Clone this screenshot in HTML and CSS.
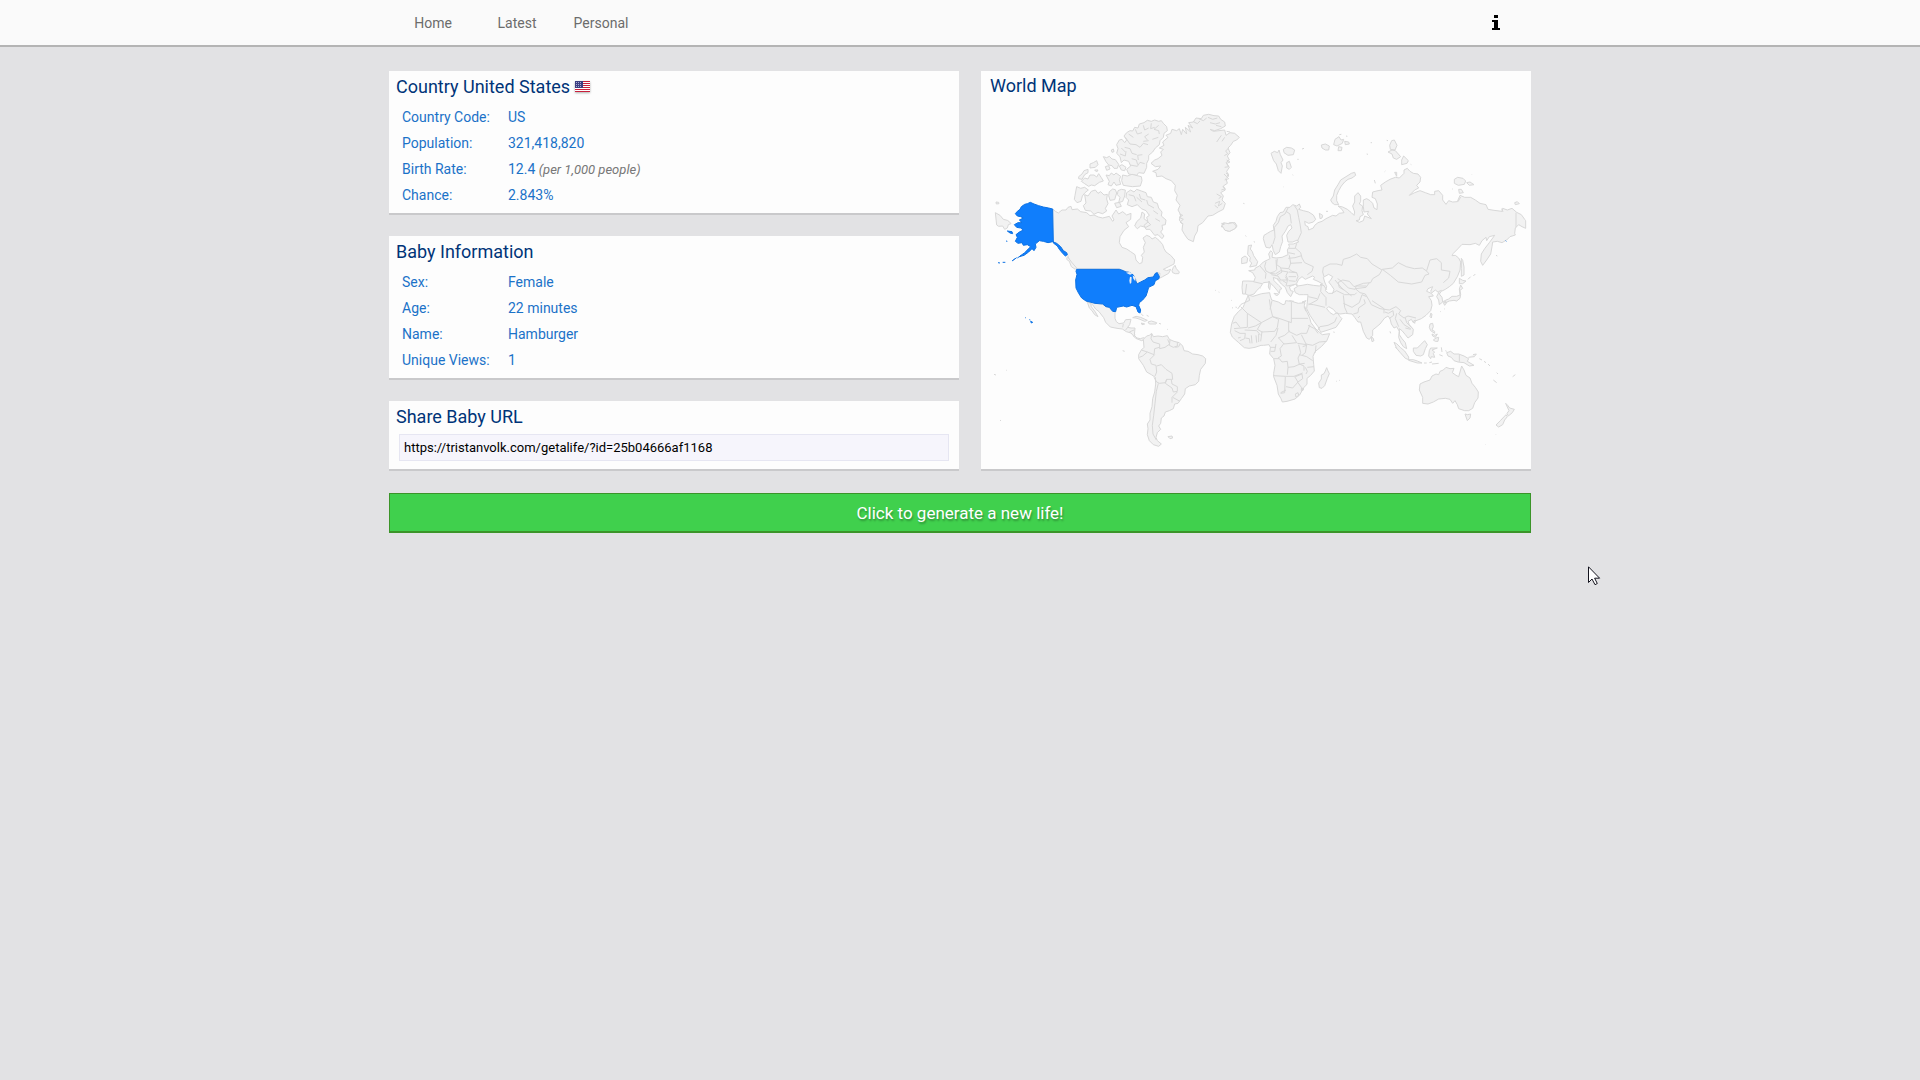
FILE: index.html
```
<!DOCTYPE html>
<html lang="en">
<head>
    <meta charset="UTF-8">
    <meta name="viewport" content="width=device-width, initial-scale=1">
    <title>Get A Life</title>
    <link rel="stylesheet" href="styles.css">
</head>
<body>
    <header class="navbar">
        <nav class="nav-inner">
            <a class="nav-link" href="#home">Home</a>
            <a class="nav-link" href="#latest">Latest</a>
            <a class="nav-link" href="#personal">Personal</a>
            <a class="nav-info" href="#about" aria-label="About">
                <svg width="8" height="16" viewBox="0 0 8 16"><path d="M2 0h4v3H2zM0 5h6v8h2v2H0v-2h2V7H0z"/></svg>
            </a>
        </nav>
    </header>

    <main class="container">
        <div class="columns">
            <div class="left-column">
                <section class="card">
                    <h2 class="card-title">Country United States
                        <svg class="flag" width="16" height="12" viewBox="0 0 16 12">
                            <path fill="#fff" d="M0 0h15v11H0z"/>
                            <path stroke="#c8203c" d="M0 .5h15M0 2.5h15M0 4.5h15M0 6.5h15M0 8.5h15M0 10.5h15"/>
                            <path fill="#3c3f82" d="M0 0h8v7H0z"/>
                            <path stroke="#a9abd0" stroke-dasharray="1 1" d="M1 1.5h6M1 3.5h6M1 5.5h6"/>
                        </svg>
                    </h2>
                    <table class="info">
                        <tr><th scope="row">Country Code:</th><td>US</td></tr>
                        <tr><th scope="row">Population:</th><td>321,418,820</td></tr>
                        <tr><th scope="row">Birth Rate:</th><td>12.4 <i>(per 1,000 people)</i></td></tr>
                        <tr><th scope="row">Chance:</th><td>2.843%</td></tr>
                    </table>
                </section>

                <section class="card">
                    <h2 class="card-title">Baby Information</h2>
                    <table class="info">
                        <tr><th scope="row">Sex:</th><td>Female</td></tr>
                        <tr><th scope="row">Age:</th><td>22 minutes</td></tr>
                        <tr><th scope="row">Name:</th><td>Hamburger</td></tr>
                        <tr><th scope="row">Unique Views:</th><td>1</td></tr>
                    </table>
                </section>

                <section class="card">
                    <h2 class="card-title"><label for="share-url">Share Baby URL</label></h2>
                    <input class="share-url" id="share-url" type="text" readonly value="https://tristanvolk.com/getalife/?id=25b04666af1168">
                </section>
            </div>

            <section class="card map-card">
                <h2 class="card-title">World Map</h2>
                <svg class="map" viewBox="0 0 1650 1107" role="img" aria-label="World map with the United States highlighted">
                    <!-- Canada, Greenland, Iceland -->
                    <g class="land" transform="translate(-3 -120)">
                        <path d="M46 458l14 8 10 12 12 3 6 4 5 6-8 3-3 10-8 4-6-10-12 1-6-4zM48 426l8 1 1 4-8 1z"/>
                        <path d="M218 447L226 454 235 459 246 450 258 450 264 442 273 439 276 449 292 447 302 455 320 458 330 467 342 465 355 471 368 474 388 469 398 484 402 480 396 468 408 450 416 462 428 455 440 465 453 460 452 478 438 488 446 500 432 511 420 530 418 548 426 562 440 567 452 575 465 584 468 600 478 611 486 608 488 592 484 586 493 576 490 562 496 548 489 534 500 526 510 530 516 537 526 532 538 542 548 554 552 566 558 576 572 586 584 600 582 612 566 620 550 628 560 632 572 628 566 640 548 650 538 655 540 640 530 637 520 650 497 660 480 668 471 671 468 658 460 645 446 636 434 634 418 627 288 627 276 614 268 600 262 582 246 566 232 553 218 545z"/>
                        <path d="M576 632l4-10 5-6 4 10 9 10-2 5-10 0-8-3zM262 590l8 10 6 8 14 16-4 4-12-8-6-16-8-6z"/>
                        <path d="M432 228L440 218 450 212 458 213 464 202 474 204 478 192 492 188 502 181 514 184 524 180 536 184 544 182 550 190 560 200 562 212 552 220 550 232 540 242 538 254 526 264 518 276 506 286 506 298 500 310 500 322 492 340 476 338 470 346 446 342 440 328 452 318 446 304 432 300 424 308 420 290 410 280 414 266 410 254 418 240 426 238 434 248 440 240z"/>
                        <path class="line" d="M436 232l14 20 18 2 12 8 10-12 14 4M434 262l16 4 6 14 14 4M420 282l16 6 2-14M446 222l14 10M466 208l6 14 14-4M490 196l4 14 12-6M514 190l-2 16 12-4M536 196l-14 12 14 4 2 10M455 296l14 4 4 14M475 300l-2-14 14-2M450 315l22 4 8-12 14 4M506 222l-12 8 8 10M535 232l-18 6M490 244l16-2M424 264l12 12"/>
                        <path d="M428 345l14 3 14-5 28 7 2 12-5 16-24 2-27-4-5-14zM394 270l6-3 2 8-6 2zM296 350l10-8 6-10 12-4 0 10-10 6-8 14-10-2zM304 364l10-10 10 3 6-12 12 0 8 6 6-10 8 12 6 10-12 4-14 10-10-2-8 4-12-8zM330 312l10-4 10-6 4 12-8 8-16 2zM344 330l10 0-4 6zM370 290l10 3 8-4 8 8 10 2 10 14-4 12-10 0-6-8-10-2-8-10zM378 345l10 2 6-8 8 6 6-6 14 10-4 10 4 14-14 3-6-10-8 12-10-4 4-10zM376 320l10-3 4 10-10 4zM418 318l8-4 12 8-4 10-10-2zM388 395l10-8 8 2 4 10-6 20-14 2-4-14zM414 392l10-4 12 2-2 18-6 16-12 4 4-16-8-8zM404 430l14-3 6 12-14 4z"/>
                        <path d="M290 380l12 5 12-3 11 8-10 8-8 10-4 16-12 4-8-10 2-12zM314 404l10 4 10-14 12-4 8 10 8-5 10 10 10-2-2 14 4 14-8 14 4 8-12 8-14-4-12 6-10-10-16-2-6-14 8-8z"/>
                        <path d="M440 398L452 390 462 396 470 388 484 393 498 398 502 410 514 412 520 426 532 430 536 444 546 456 544 468 558 480 556 494 546 496 548 508 542 516 552 528 546 536 534 524 524 526 510 508 498 508 492 496 504 486 500 472 508 466 498 452 484 446 472 434 456 440 442 434 446 420 438 412zM470 485L482 474 486 456 494 462 492 476 502 484 512 494 498 502 482 498 472 506 464 498z"/>
                        <path class="line" d="M446 404l16 4 6 16M478 402l4 14 14 4M500 420l4 14 18 10M520 452l14 10M526 476l14 8M470 412l16 14"/>
                        <path d="M513 310L524 300 534 296 546 286 542 276 550 268 538 264 552 256 548 246 564 232 558 226 572 220 576 208 590 212 598 206 604 224 608 208 620 222 616 202 632 216 624 196 638 204 626 188 640 186 648 174 664 176 670 166 686 163 702 167 716 168 722 178 734 186 736 198 722 206 704 212 690 208 700 214 734 210 738 226 750 218 764 220 778 232 770 240 760 244 752 256 744 264 750 278 742 288 748 300 738 308 748 322 740 334 746 348 738 356 742 370 730 378 736 390 722 398 730 408 726 420 736 430 730 448 714 456 698 466 684 468 668 488 654 497 652 514 644 528 640 545 624 538 614 524 606 510 608 494 598 480 602 464 594 450 600 436 588 420 592 406 584 392 586 376 574 362 558 356 546 348 530 350 528 338 518 334 534 328 542 318 526 320z"/>
                        <path class="line" d="M745 265l-8 8 6 8-10 6M740 300l10 6-10 4 6 10-12 2M738 340l8 2-6 8 6 6-12 4M728 380l8 6-12 4M710 402l14 8-8 6M705 430l14-6-4 14 12-8M704 436l10 8M598 462l10 4-10 6 12 6-10 8 10 6M640 185l12 6 8-8M656 176l14 6 10-8M684 172l14 6 14-4M690 188l16 4 14-4M708 196l16 4M724 226l-14 20M734 232l-8 12M740 350l-8-8"/>
                        <path d="M723 500l6-3-4-7 10 1 6 2 8-5 16 0 6 10-4 6-16 9-8 0-10-5 4-6zM790 430l3 1M740 214l10 2M796 527l2 1M822 544l2 2"/>
                    </g>
                    <!-- Central and South America -->
                    <g class="land" transform="translate(-3 420)">
                        <path d="M318 183l27 7 23 2 10 8 10 2 8 10 9 3 0 20 4 10 8 6 14-2 6-10 16-1-4 16-6 8 10 2 12 0-2 22 8 8 10 2 10-3 6 4-12 5-18-7-14-16-14-4-12-8-16-2-20-4-14-14-6-14-14-18-10-8-10-14z"/>
                        <path d="M322 186l10 4 2 10 12 16 8 14-10-6-8-12-8-8z"/>
                        <path class="line" d="M428 262l2-10M443 262l-6 8M462 270l-14 6M466 285l-6 4"/>
                        <path d="M458 233l10-4 14 3 20 9-8 3-14-6-12-4zM504 246l10-3 16 5-2 4-20 0zM484 249l10 3-8 2zM537 250l6 2M482 220l8 8M500 226l6 3M562 268l2 1M428 332l6 2"/>
                        <path d="M490 298L500 288 508 286 515 280 520 290 534 288 548 290 562 287 568 298 582 304 598 308 608 318 612 332 624 334 638 342 654 344 668 348 677 356 676 370 662 388 658 406 656 424 646 434 628 438 616 446 614 462 604 476 594 490 584 492 580 506 568 512 556 516 552 528 544 534 542 550 536 558 542 568 532 578 528 592 532 602 544 612 536 619 520 614 508 602 502 584 504 566 502 552 510 540 510 520 516 500 518 476 524 456 527 432 526 412 514 404 500 396 490 376 476 356 476 344 484 330 492 322z"/>
                        <path class="line" d="M515 282l-2 14 6 10 20 6 0 14 16-4 14-10-6-14M570 300l-2 16 12 6 12-4 0-12M600 312l-4 8-10 2M478 352l10-4 14-12-18-6M502 336l20 8 2-18 14-4M524 344l-14 14 4 14 14 4 2 20-5 12M530 378l14-4 14 14 18 12 2 18-18 0-4 10-18 2-8-4-8-14M560 418l-4 12 20 14 4 12 12-2 0-14-16-8-2-12M592 456l-16 16 0 16M578 472l22 12M535 430l-6 24-4 36-4 36-4 30 2 26 10 18"/>
                        <path d="M564 590l12-2 2 6-8 2zM42 403l6 2M78 390l2 1M60 541l3 1M706 151l2 1M716 156l2 1"/>
                    </g>
                    <!-- Europe and Asia -->
                    <g class="land" transform="translate(717 0)">
                        <path d="M150 444L138 442 134 430 130 416 132 406 142 400 152 394 162 390 160 376 168 364 172 350 180 338 190 336 198 322 210 322 218 314 230 318 238 312 242 322 236 328 250 332 266 336 280 345 287 358 280 366 266 370 254 364 256 376 264 380 266 390 280 384 284 376 294 368 306 364 318 356 330 350 338 346 348 348 358 340 372 338 366 328 354 318 368 321 382 328 394 338 402 346 404 336 398 318 404 306 404 288 414 278 422 288 422 304 418 312 428 318 426 332 430 344 420 350 418 360 408 362 418 367 430 362 434 348 444 352 454 356 442 342 446 334 432 336 430 320 430 300 440 296 450 302 458 310 462 324 471 329 472 312 466 296 456 292 458 276 474 272 486 270 482 256 496 246 510 238 526 232 538 234 552 220 552 210 562 205 570 214 580 220 594 222 602 232 600 246 590 256 596 264 584 270 568 286 584 278 600 272 616 278 632 284 644 284 644 274 656 272 668 286 668 300 678 313 686 302 698 306 712 305 720 286 734 292 752 292 766 300 780 310 798 314 804 328 822 331 846 334 848 325 862 330 876 325 890 337 904 344 914 358 917 362 917 385 906 380 896 374 886 384 884 400 886 405 870 410 860 420 846 428 832 424 818 426 816 440 812 462 800 480 788 496 782 484 784 462 794 446 808 428 824 406 808 410 800 422 798 412 786 422 778 436 766 430 750 434 726 433 714 446 700 460 696 467 706 466 716 474 722 486 720 510 712 530 700 550 688 560 676 568 664 574 658 582 666 592 668 606 658 614 656 600 650 590 656 578 646 570 636 578 632 574 638 560 624 566 620 574 634 580 640 588 626 590 634 602 636 616 632 632 618 646 604 656 588 662 580 668 574 658 564 664 568 674 580 688 578 704 564 714 556 704 546 692 538 686 538 704 546 716 556 728 560 746 550 740 542 728 536 712 538 694 530 680 522 684 514 672 510 656 504 648 494 654 480 672 468 682 458 690 458 706 448 718 440 714 430 694 422 666 414 666 404 652 396 642 376 640 360 642 350 640 340 628 326 620 320 626 330 638 340 644 352 638 360 650 366 656 358 668 348 682 324 690 302 697 294 680 282 664 270 646 260 626 262 606 264 584 250 584 238 584 226 578 222 566 232 560 228 552 218 556 208 560 212 572 220 574 212 590 202 578 196 562 184 552 170 536 160 532 162 542 176 556 186 566 180 568 178 580 172 572 162 560 148 546 130 548 122 560 110 572 102 582 86 587 78 582 68 582 66 562 68 543 84 543 102 544 106 532 98 518 86 512 104 510 106 504 118 498 130 486 142 480 150 476 146 462 152 452 158 458 156 472 168 474 186 472 204 464 202 450 208 440 206 432 220 432 236 426 232 420 218 426 204 426 200 406 206 394 216 384 212 374 204 378 196 394 186 408 188 424 182 440 178 456 166 464 160 452 156 434z"/>
                        <path class="sea" d="M230 550L236 538 246 530 256 538 264 534 278 528 284 532 280 538 294 544 308 552 298 558 280 556 262 553 246 556 232 558zM310 532L326 523 338 530 332 540 326 546 334 556 342 568 338 580 326 580 316 572 320 560 314 546z"/>
                        <path class="line" d="M205 322l-10 20-14 8-6 18-12 14 2 30-6 20M198 334l12 8 4 28M224 318l8 12 4 22 4 20 4 26-12 26M230 430l-4 14 16 14 4 16 8 14 26 12-4 14-14 10M138 485l-4 14 4 14 12 6 14-4 6-6-2-30M172 476l-2 18 14 10 22 2 6-16-4-24M120 498l12 14 6 8-2 16M207 445l20 0M205 458l20 4M205 475l20-2 20-6M210 490l36-2M206 506l10 8 14 4 4 12-6 14M150 520l16 2 16-10 22 4-6 10 6 14-22 0-8-12-20-4M182 504l4 12-16 10M196 530l6 12-4 16M206 542l20 2M200 558l22-4M188 542l10 6M100 545l26 6M80 552l-4 30M206 516l24 2M172 534l10 10M206 530l22 0"/>
                        <path class="line" d="M312 530l-4-14 2-14 20-10 20 0 16 4 4-18 20-6 20-10 12 10 20 4 14 16 30 18-8 14-20 12-6 12-22 2-28 10-14-16-20-4-14 8 4 14 14 8M487 508l30-4 18-16 24 12 24 6 24-2 14 10 6 8-12 4-10 20-30 6-40-6-24-20zM620 512l10-32 20-4 14 12 0 22 26 4-4 20-16 14M448 548l-10 14-32 4 14 12 16 4 12 20 6 12 26 12 28 4 20-10 14 12-6 10 16 12 12-6 24 6M405 568l-20-4-20-20-12-8M405 568l4-10 30 0M336 580l14-8 24 12 30 0 6-6M302 575l16 18 0 24M302 575l2-22M310 555l10 14M370 586l4 36 8 18M370 610l26 12 22-14 8-24 14 6M400 642l14-4 2-14 20-14-4-12M456 602l36 24 0 14M414 654l6-6M265 612l16 2 34 8M300 580l-8 20-26 14M265 590l26 6M294 690l6-10 24-4 20-10 6-14M300 553l12 4M345 540l20 24 30 24M495 636l10 4 14-8 2 14-14 10M530 640l-4 16 10 24M540 658l12 16 20 12M556 654l4 14 14 14M556 684l16 4M655 575l10-4M888 338l0 44M845 326l4 10M714 305l8-14"/>
                        <path d="M85 437l10-2-4 12 6 8 4 12 12 18-4 12-20 4 6-12-6-6 2-10-8-10zM65 474l10-6 8 6-2 14-16 3zM5 375l8-2-2-5 14 3 14-3 10 10-4 8-16 8-14-3zM72 311l1 1M102 426l2 1M78 408l1 1"/>
                        <path d="M153 160l10-6 10 4 4-8 4 14 8 16-6 8 4 10-4 22-8-8-6-20-8-10zM190 148l10-6 14 2 10 6-4 14-16 2-12-8zM200 188l8-4 6 18-6 6-8-4zM232 178l4 0M246 147l6-2M218 224l1 2M191 261l1 1"/>
                        <path d="M304 135l12-3 12 6-2 12-10 0-10-6zM345 118l12-8 6 10 8-2-4 12-16 8-10-4zM356 140l10 2-2 10-10 0zM374 124l12 2 2 6-12 2zM378 108l4 1M358 104l6-1M452 128l4 0M440 162l4 1"/>
                        <path d="M332 300L340 288 344 270 354 254 362 240 378 230 394 220 404 217 407 226 396 234 384 238 374 246 364 258 356 272 350 286 350 302 356 314 344 314 336 308zM298 340l10 6-2 8-6 2zM318 334l6 0"/>
                        <path d="M515 122l8-2 8 16-6 14-14-2-2-12zM504 156l12-6 10 2 16 18-12 8-10-4-4-12zM545 180l6-12 14 14-4 8-16 4zM500 121l4 1M572 193l2 1M524 217l6 0 0 12zM463 240l3 10M494 215l2-2"/>
                        <path d="M703 238l10-6 16 3 8 8-4 10-18 3-12-6zM740 248l10-2 12 8-14 2zM716 268l8 0 6 10-12 2zM754 222l1 1M696 267l2 0M884 308l8-3 6 6-12 3z"/>
                        <path d="M724 475l4 6 4 20 0 24-8 4 0-24zM828 466l4 2M766 522l-6 6M752 530l-8 8M718 535l10 6 10 2-10 8-10 0zM722 555l-4 12 2 18-10 4-14 0-10 8-10 4-2 8 14-6 14-2 8 2 10-8 2-12-2-12 8-6zM672 602l8 6-6 8-4-8z"/>
                        <path d="M120 563l2 1M147 543l4 12-2 14-4-8zM162 580l14 2-6 6zM208 602l14 2M246 606l12-4-8 8z"/>
                    </g>
                    <!-- Africa, Indonesia, Oceania -->
                    <g class="land" transform="translate(717 480)">
                        <path d="M85 105l14 4 26-8 24-3 2 10 4 12 20 6 14 8 6-2 2-10 18 2 20 6 20-2-2 8 6 16 10 22 4 14 12 16 14 14 8 6 22-3-8 20-16 18-20 16-6 14 2 24 2 20-12 14-10 8 0 18-10 10-12 22-14 12-24 7-14 2-4-10-8-14-4-26-10-26 0-10 4-24-4-20-12-14 2-20-4-8-16 2-8 0-18 6-18 3-14-2-18-16-18-16-6-14 4-26 8-22 12-14 14-12 4-10z"/>
                        <path class="line" d="M85 107l4 14-26 12-10 14M62 140l20 20 42 28 34-18-6-24-4-28M82 160l0 42-40 4M38 190l10-4 12 16M84 204l22-6 18-10M156 122l-6 26M158 170l16 4 40 14 0-12 0-51M214 175l50 0M158 170l18 8-4 24-8 12-38 2-14-8 12-20M174 204l-6 22-16 20M126 214l-4 30M74 210l36 2 12 14M44 212l16 8 16 0-2 16-14 6M76 234l12 2 2 14M94 226l2 24M108 226l2 22M116 222l0 24M62 232l-8 2M206 184l0 30 24 12 14-6 16 0 10-26M174 234l20-8 16-14M264 196l20 10 10 14M216 226l14 22-38 4-16-18M192 250l-12 16 4 22-10 6M150 262l18 0M152 274l12 0 4-22M244 224l14 28 20 4 20-10 22-2M288 256l-2 22M232 250l28 4-4 24-10 8M260 256l-12 4M238 284l22 6 18 12M236 254l6 24-8 16 4 20M162 296l16 0 8 10 16-2 2 18 18-2 18-8 14-2M160 347l36 2 26 0 26-10M204 322l-2 22M238 312l14 6 0 14M256 322l6 12-4 8M262 322l20-2M196 350l-2 48-12 2M198 380l20 4 16-18-10-16M234 366l14-10-2-14-20 8M234 368l10 14 4 10M226 402l8-4 2 8-8 6zM244 386l6-2 0 6-6 2zM182 398l16-8M258 154l-6-14"/>
                        <path d="M320 323l4 10 4 8-6 14-8 22-8 8-8-2-2-14 8-12 0-12 8-4 4-8zM348 363l2 1M358 361l2 1M340 216l4 1M34 121l2 1M36 143l3 1M48 140l1 4"/>
                        <path d="M600 372L612 366 630 360 636 348 648 342 656 344 660 334 670 330 678 322 690 326 702 325 697 338 708 346 716 350 720 336 725 318 732 330 738 346 750 354 756 370 766 382 775 396 774 414 764 428 758 445 746 452 734 452 716 446 712 434 705 422 698 430 690 418 676 415 656 417 640 426 624 432 608 430 608 412 598 390z"/>
                        <path d="M735 462l8 2 9-2-2 12-8 8zM857 430l6 6 6 8 14 4-6 10-12 10-4-8 6-8zM858 464l4 6-8 10-6 14-12 7-8-6 14-14zM828 524l1 1M796 553l1 1"/>
                        <path d="M522 247l8 4 12 12 12 10 12 18 0 8-10-4-16-18-10-12zM566 299l14 0 12 4 14 6-14 0-26-8zM580 264l12 0 10-10 12-12 8 12-6 12-6 18-8 4-14-2-8-12zM628 272l4-8 20 0-16 6 8 6-4 4 4 12-10-2-2 6-6-8zM612 309l8 0M628 308l8-2M636 312l20-2M664 262l2 14M658 284l10 4M676 272l4 2"/>
                        <path d="M680 278L692 274 702 282 716 282 732 288 746 296 742 304 762 316 748 318 732 308 714 306 702 302 694 292 684 288zM718 283l0 22M745 292l18-2 6-8-10 2M778 296l8 4M792 304l6 4M804 312l6 6M830 338l4 4M820 360l10 8M878 350l8-6"/>
                        <path d="M630 192l8-2 2 10-4 10 8 4 0 6-12-8-4-10zM636 222l8 4 8-4-6 10-8-4zM640 240l8-6 8-2-2 12-8 0zM630 170l2-10 4 2-2 12zM510 214l2 6M526 262l4 4M453 230l6 4 3 8-6 3zM580 184l6-4-2 10zM660 154l2 1M672 146l2 1"/>
                    </g>
                    <!-- United States -->
                    <g class="country-active" transform="translate(-3 -120)">
                        <path d="M218 447L206 444 190 441 176 437 162 432 151 427 142 431 134 433 124 440 120 448 112 454 106 461 112 468 122 470 130 474 118 480 126 488 114 488 103 494 110 502 122 504 130 510 118 516 108 524 112 532 106 544 114 550 126 548 130 556 142 554 152 560 144 568 134 578 118 590 132 586 146 576 156 566 162 572 168 562 166 552 178 542 190 544 204 548 218 545 230 550 242 560 250 572 260 578 262 584 256 588 248 580 238 568 232 558 220 549zM82 513l14 2 2 6-8-2zM78 543l4 1M104 597l-8 6M100 600l10-7M112 594l12-8M54 608l6 1M68 607l8 0M136 773l2 1M148 779l3 1M152 784l6 3-4 2zM1577 542l2 2"/>
                        <path d="M290 628L418 628 430 632 438 636 448 637 460 645 466 660 471 672 482 666 494 660 504 653 520 651 526 640 532 638 538 650 536 657 526 662 522 674 506 682 502 696 498 708 488 720 478 728 476 736 482 750 480 759 474 756 468 740 456 736 440 741 430 738 410 742 407 755 398 754 388 742 378 740 368 732 345 730 330 726 318 723 305 714 296 700 288 684 287 660 291 643 288 634z"/>
                        <path class="lake" d="M438 638l10-2 10 5-8 3zM450 650l5 2-1 16-4 4-2-10zM458 646l8 6 0 12-6-8z"/>
                    </g>
                </svg>
            </section>
        </div>

        <button class="generate" type="button">Click to generate a new life!</button>
    </main>

    <svg class="pointer" width="13" height="20" viewBox="0 0 13 20"><path fill="#fff" stroke="#14141e" d="M.5.8v15.700l3.500-3.500 3 5.700 2.300-1.200-2.700-5.300h5z"/></svg>
</body>
</html>
```

FILE: styles.css
```
* {
    box-sizing: border-box;
}

body {
    margin: 0;
    background: #e2e2e4;
    font-family: Roboto, "Liberation Sans", sans-serif;
    font-size: 14px;
}

.navbar {
    background: #fafafa;
    border-bottom: 2px solid #b4b4b4;
}

.nav-inner,
.container {
    max-width: 1142px;
    margin: 0 auto;
}

.nav-inner {
    display: flex;
    align-items: center;
    height: 45px;
    padding: 0 31px 0 2px;
}

.nav-link {
    width: 84px;
    text-align: center;
    color: #6c6c6c;
    text-decoration: none;
}

.nav-info {
    margin-left: auto;
    line-height: 0;
}

.container {
    padding-top: 24px;
}

.columns {
    display: grid;
    grid-template-columns: 57fr 55fr;
    gap: 22px;
}

.left-column {
    display: flex;
    flex-direction: column;
    gap: 23px;
}

.card {
    background: #fdfdfd;
    padding: 4px 10px 5px 7px;
    box-shadow: 0 2px 0 #c9c9cb;
}

.card-title {
    margin: 0;
    font-size: 18px;
    font-weight: 400;
    line-height: 24px;
    color: #003478;
}

.flag {
    filter: drop-shadow(0 1px 1px rgba(0, 0, 0, 0.3));
}

.info {
    margin-top: 5px;
    border-collapse: collapse;
    color: #1b72c8;
}

.info th,
.info td {
    padding: 0;
    height: 26px;
    font-weight: 400;
    text-align: left;
}

.info th {
    width: 112px;
    padding-left: 6px;
}

.info i {
    font-size: 13px;
    color: #777;
}

.share-url {
    display: block;
    width: calc(100% - 3px);
    height: 27px;
    margin: 5px 0 3px 3px;
    padding: 0 4px;
    border: 1px solid #e6e6f2;
    background: #f6f5fc;
    font: inherit;
    font-size: 13px;
    color: #000;
}

.map-card {
    padding: 3px 0 0;
}

.map-card .card-title {
    padding-left: 9px;
}

.map {
    display: block;
    width: 100%;
    margin-top: 2px;
}

.land path,
.country-active path {
    vector-effect: non-scaling-stroke;
    stroke-width: 1px;
    stroke-linejoin: round;
}

.land path {
    fill: #f2f2f2;
    stroke: #d8d8d8;
}

.land .line {
    fill: none;
}

.land .sea {
    fill: #fdfdfd;
}

.country-active path {
    fill: #107efc;
    stroke: #0d72e4;
}

.country-active .lake {
    fill: #e8eef6;
    stroke: none;
}

.generate {
    display: block;
    width: 100%;
    height: 40px;
    margin-top: 24px;
    border: 1px solid #3b9429;
    border-bottom-width: 2px;
    background: #40d04d;
    font: inherit;
    font-size: 17px;
    color: #fff;
    text-shadow: 1px 2px 2px rgba(0, 0, 0, 0.3);
    cursor: pointer;
}

.pointer {
    position: absolute;
    left: 1588px;
    top: 566px;
}
```
